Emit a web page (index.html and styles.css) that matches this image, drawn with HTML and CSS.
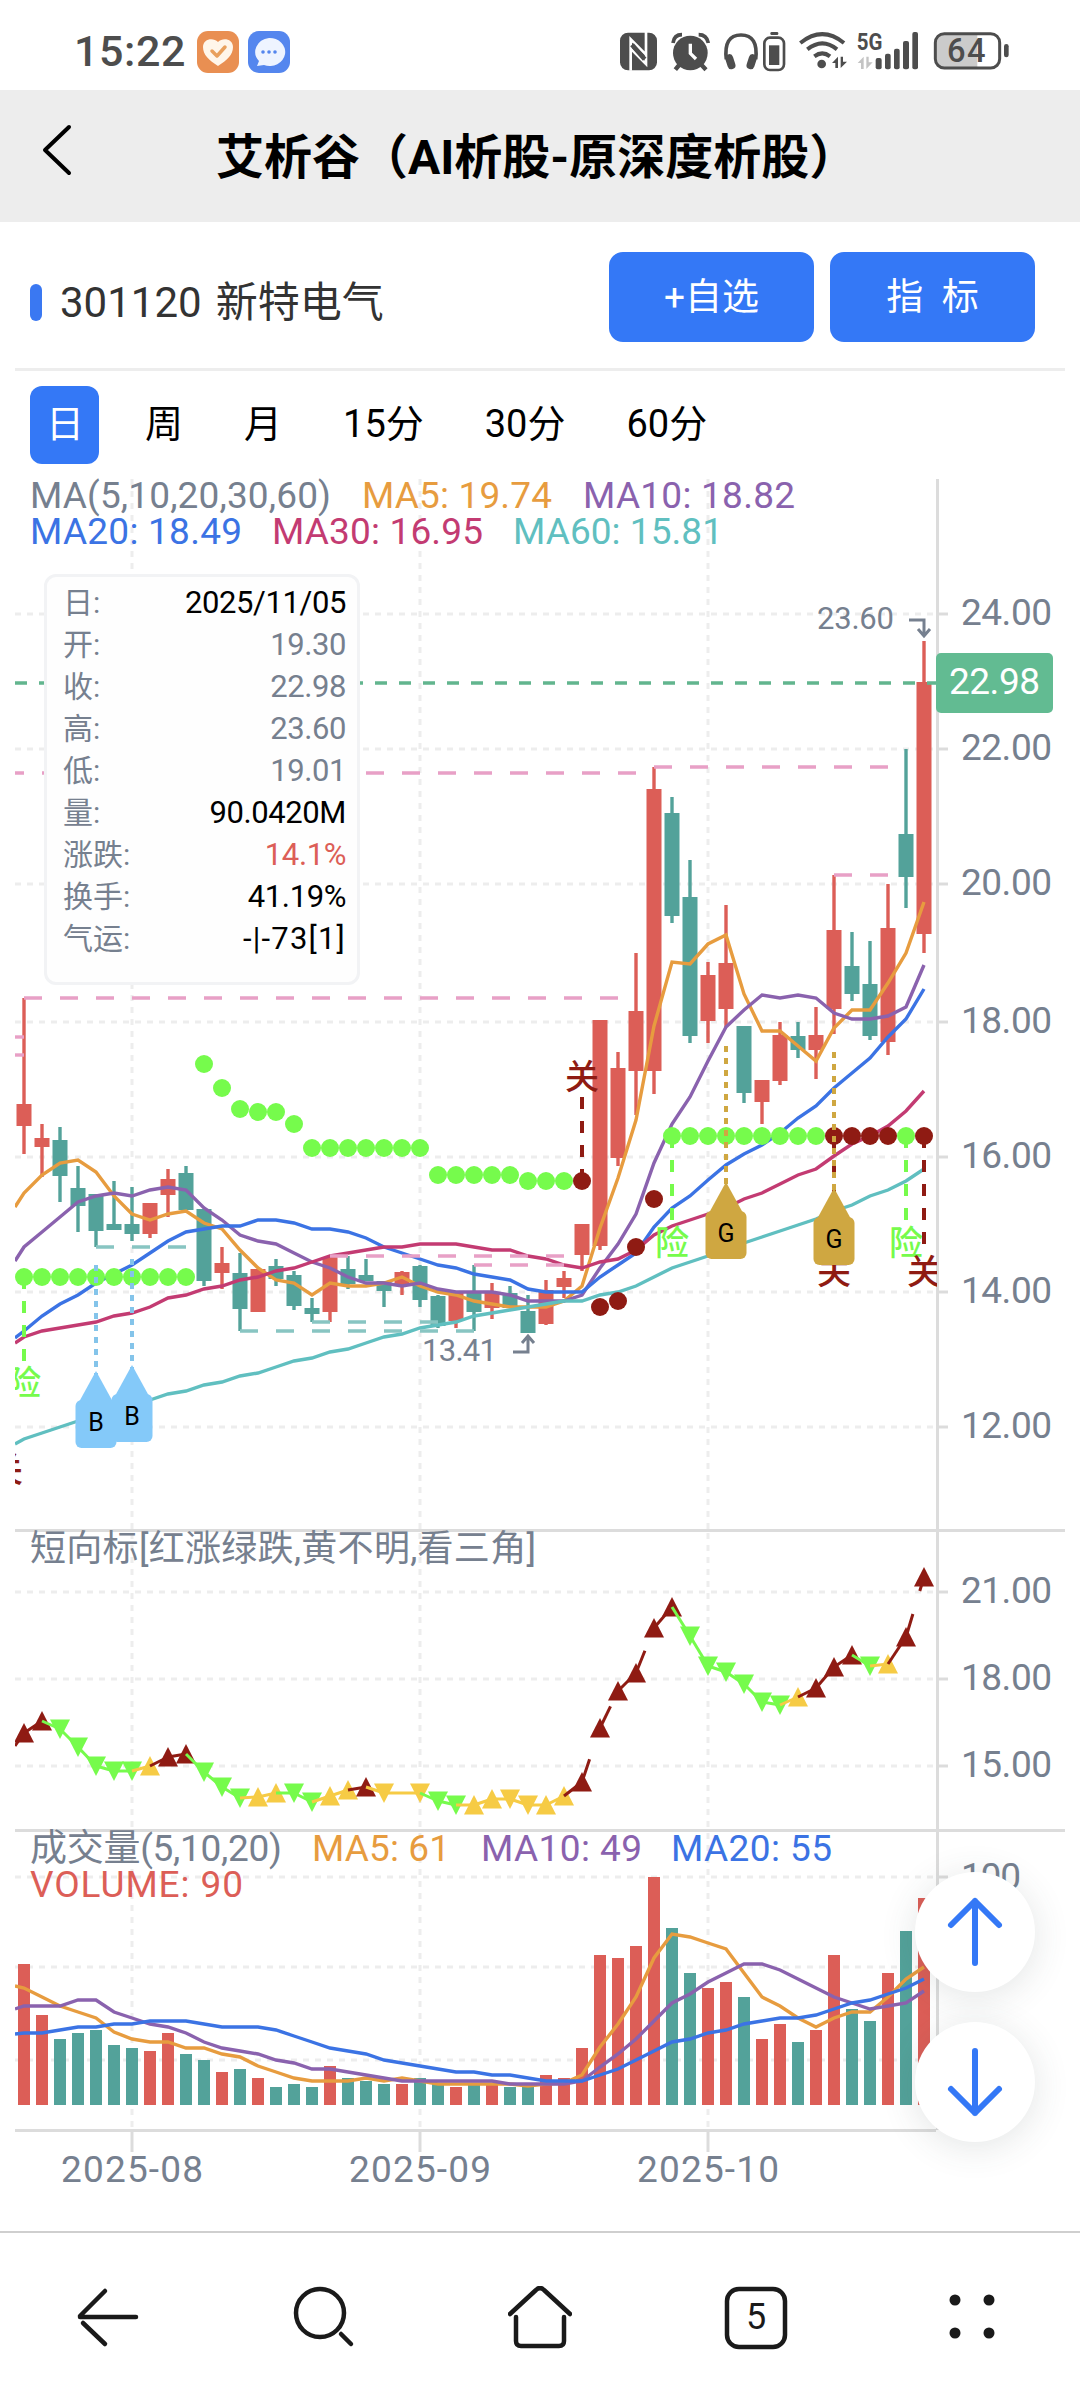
FILE: index.html
```html
<!doctype html>
<html lang="zh-CN">
  <head>
    <meta charset="utf-8">
    <title>艾析谷</title>
    <link rel="stylesheet" href="styles.css">
  </head>
  <body>
    <!-- status bar -->
    <div class="status">
      <span class="clock">15:22</span>
      <svg class="app-icon" viewBox="0 0 42 42">
        <rect width="42" height="42" rx="11" fill="#e98f52"/>
        <path d="M21 35 C12 29 6 24 6 16 C6 8 16 6 21 11 C26 6 36 8 36 16 C36 24 30 29 21 35Z" fill="#fff6ea"/>
        <path d="M15 20 l5 5 l8 -9" fill="none" stroke="#e9a05c" stroke-width="3.5" stroke-linecap="round" stroke-linejoin="round"/>
      </svg>
      <svg class="app-icon" viewBox="0 0 42 42">
        <rect width="42" height="42" rx="11" fill="#5486ee"/>
        <path d="M21 7 a15.500 14 0 1 1 -5 27 l-7 1 l2 -5 a15.500 14 0 0 1 10 -23Z" fill="#eef4ff"/>
        <circle cx="15" cy="21" r="1.800" fill="#5486ee"/>
        <circle cx="21" cy="21" r="1.800" fill="#5486ee"/>
        <circle cx="27" cy="21" r="1.800" fill="#5486ee"/>
      </svg>
      <svg class="signals" viewBox="0 0 1320 198">
        <!-- nfc -->
        <rect x="60" y="38" width="111" height="113" rx="24" fill="#4d4d4d"/>
        <path d="M92 152 V58 L138 104 M138 36 V132 L92 86" fill="none" stroke="#fff" stroke-width="8"/>
        <path d="M96 74 L134 118" stroke="#4d4d4d" stroke-width="14"/>
        <!-- alarm -->
        <circle cx="271" cy="99" r="52" fill="#4d4d4d"/>
        <path d="M219 69 Q222 44 246 44 M296 44 Q320 44 325 69" fill="none" stroke="#4d4d4d" stroke-width="11"/>
        <path d="M240 132 L226 149 M302 132 L318 149" stroke="#4d4d4d" stroke-width="13"/>
        <path d="M271 71 V100 L288 117" fill="none" stroke="#fff" stroke-width="10"/>
        <!-- headphones -->
        <path d="M379 118 Q370 45 423 45 Q476 45 467 118" fill="none" stroke="#4d4d4d" stroke-width="11"/>
        <rect x="379" y="102" width="24" height="46" rx="12" fill="#4d4d4d" transform="rotate(-18 391 125)"/>
        <rect x="443" y="102" width="24" height="46" rx="12" fill="#4d4d4d" transform="rotate(18 455 125)"/>
        <rect x="493" y="53" width="59" height="97" rx="17" fill="none" stroke="#4d4d4d" stroke-width="8"/>
        <rect x="511" y="36" width="24" height="9" rx="4" fill="#4d4d4d"/>
        <rect x="507" y="76" width="31" height="59" fill="#4d4d4d"/>
        <!-- wifi -->
        <g fill="none" stroke="#4d4d4d" stroke-width="12">
          <path d="M601 69 Q667 16 732 69"/>
          <path d="M622 88 Q667 52 711 88"/>
          <path d="M643 109 Q667 91 690 109"/>
        </g>
        <circle cx="665" cy="132" r="13" fill="#4d4d4d"/>
        <path d="M696 129 L714 110 V144 H706 V129Z M722 110 H729 V125 H741 L722 144Z" fill="#4d4d4d"/>
        <path d="M773 129 L791 110 V147 H783 V129Z M799 110 H806 V127 H818 L799 147Z" fill="#c4c4c4"/>
        <text class="net" x="770" y="90" textLength="77" lengthAdjust="spacingAndGlyphs">5G</text>
        <g fill="#4d4d4d">
          <rect x="827" y="114" width="18" height="34" rx="6"/>
          <rect x="855" y="101" width="17" height="47" rx="6"/>
          <rect x="882" y="86" width="17" height="62" rx="6"/>
          <rect x="909" y="63" width="18" height="85" rx="6"/>
          <rect x="937" y="36" width="17" height="112" rx="6"/>
        </g>
        <!-- battery -->
        <path d="M1132 43 H1030 Q1007 43 1007 68 V118 Q1007 143 1030 143 H1132Z" fill="#cbcbcb"/>
        <rect x="1006" y="41" width="193" height="103" rx="27" fill="none" stroke="#4d4d4d" stroke-width="9"/>
        <rect x="1212" y="72" width="14" height="40" rx="7" fill="#4d4d4d"/>
        <text class="percent" x="1041" y="127" textLength="116">64</text>
      </svg>
    </div>

    <header class="titlebar">
      <svg class="chevron" viewBox="0 0 30 52"><path d="M27 3 L3 26 L27 49"/></svg>
      <h1>艾析谷（AI析股-原深度析股）</h1>
    </header>

    <section class="stock">
      <i class="mark"></i>
      <span class="stock-name"><span class="code">301120</span>新特电气</span>
      <button class="btn">+自选</button>
      <button class="btn">指&nbsp; 标</button>
    </section>

    <nav class="periods">
      <a class="active">日</a>
      <a>周</a>
      <a>月</a>
      <a>15分</a>
      <a>30分</a>
      <a>60分</a>
    </nav>

    <main class="chart">
      <svg id="chart" viewBox="0 464 1080 1767"></svg>
      <dl class="card">
        <div><dt>日:</dt><dd class="dark">2025/11/05</dd></div>
        <div><dt>开:</dt><dd>19.30</dd></div>
        <div><dt>收:</dt><dd>22.98</dd></div>
        <div><dt>高:</dt><dd>23.60</dd></div>
        <div><dt>低:</dt><dd>19.01</dd></div>
        <div><dt>量:</dt><dd class="dark">90.0420M</dd></div>
        <div><dt>涨跌:</dt><dd class="up">14.1%</dd></div>
        <div><dt>换手:</dt><dd class="dark">41.19%</dd></div>
        <div><dt>气运:</dt><dd class="dark luck">-|-73[1]</dd></div>
      </dl>
      <div class="floating">
        <button><svg viewBox="0 0 60 72"><path d="M30 67 V5 M6 29 L30 5 L54 29"/></svg></button>
        <button><svg viewBox="0 0 60 72"><path d="M30 5 V67 M6 43 L30 67 L54 43"/></svg></button>
      </div>
    </main>

    <footer class="toolbar">
      <svg viewBox="0 0 64 64"><path d="M60 31 H4 M29 5 L4 30 M7 37 L29 58"/></svg>
      <svg viewBox="0 0 64 64"><circle cx="28" cy="27" r="24"/><path d="M49 48 L59 58"/></svg>
      <svg viewBox="0 0 64 64"><path d="M2 28 L28 4 Q32 0 36 4 L62 28 M8 31 V55 Q8 60 13 60 H51 Q56 60 56 55 V31"/></svg>
      <svg viewBox="0 0 64 64"><rect x="3" y="3" width="58" height="58" rx="12"/><text x="32" y="43">5</text></svg>
      <svg class="dots" viewBox="0 0 64 64"><circle cx="15" cy="14" r="5.500"/><circle cx="49" cy="14" r="5.500"/><circle cx="15" cy="47" r="5.500"/><circle cx="49" cy="47" r="5.500"/></svg>
    </footer>

    <script src="chart.js"></script>
  </body>
</html>
```

FILE: styles.css
```css
* {
  box-sizing: border-box;
}

body {
  margin: 0;
  width: 1080px;
  height: 2400px;
  display: flex;
  flex-direction: column;
  overflow: hidden;
  background: #fff;
  color: #000;
  font-family: Roboto, "Noto Sans CJK SC", sans-serif;
}

button {
  border: 0;
  padding: 0;
  font: inherit;
}

/* status bar */
.status {
  height: 90px;
  padding: 20px 40px 0 74px;
  display: flex;
  align-items: flex-start;
}

.clock {
  width: 123px;
  font-size: 43px;
  line-height: 63px;
  letter-spacing: 0.6px;
  font-weight: 500;
  color: #4d4d4d;
}

.app-icon {
  width: 42px;
  height: 42px;
  margin: 11px 9px 0 0;
}

.signals {
  width: 440px;
  height: 66px;
  margin-left: auto;
}

.net {
  font-size: 72px;
  font-weight: 700;
  fill: #4d4d4d;
}

.percent {
  font-size: 98px;
  font-weight: 500;
  fill: #4d4d4d;
}

/* title */
.titlebar {
  height: 132px;
  padding: 0 42px;
  display: flex;
  align-items: center;
  background: #ededed;
}

.chevron {
  width: 30px;
  height: 52px;
  margin-bottom: 12px;
  fill: none;
  stroke: #000;
  stroke-width: 4;
  stroke-linecap: round;
  stroke-linejoin: round;
}

h1 {
  margin: 3px 0 0 144px;
  font-size: 48px;
  line-height: 60px;
  font-weight: 700;
  white-space: nowrap;
}

/* stock name and buttons */
.stock {
  height: 149px;
  margin: 0 15px;
  padding: 0 30px 0 15px;
  display: flex;
  border-bottom: 3px solid #ededed;
}

.mark {
  width: 12px;
  height: 37px;
  margin-top: 62px;
  border-radius: 6px;
  background: #3a78f2;
}

.stock-name {
  flex: 1;
  margin: 50px 0 0 18px;
  font-size: 42px;
  line-height: 62px;
  color: #333;
}

.code {
  margin-right: 14px;
}

.btn {
  width: 205px;
  height: 90px;
  margin: 30px 0 0 16px;
  padding-bottom: 7px;
  border-radius: 14px;
  background: #3478f6;
  color: #fff;
  font-size: 37px;
}

/* periods */
.periods {
  height: 93px;
  padding: 15px 0 0 30px;
  display: flex;
  gap: 30px;
}

.periods a {
  height: 78px;
  padding: 0 15px 0 16px;
  border-radius: 12px;
  font-size: 38px;
  line-height: 77px;
}

.periods .active {
  background: #3478f6;
  color: #fff;
}

/* chart */
.chart {
  height: 1767px;
  position: relative;
}

#chart {
  display: block;
  width: 1080px;
  height: 1767px;
  font-size: 37px;
}

.grid {
  fill: none;
  stroke: #ededed;
  stroke-width: 3;
  stroke-dasharray: 6 6;
}

.axis {
  fill: none;
  stroke: #dcdcdc;
  stroke-width: 3;
}

.axis-text {
  fill: #76808f;
}

.cn {
  font-size: 34px;
  font-weight: 500;
  text-anchor: middle;
}

.pin {
  fill: #000;
  font-size: 25px;
  text-anchor: middle;
}

.card {
  position: absolute;
  left: 44px;
  top: 110px;
  width: 316px;
  height: 411px;
  margin: 0;
  padding: 5px 11px 0 16px;
  border: 3px solid #f2f3f5;
  border-radius: 12px;
  background: #fefefe;
  color: #76808f;
  font-size: 31px;
}

.card div {
  height: 42px;
  display: flex;
  justify-content: space-between;
  line-height: 42px;
}

.card dt {
  font-size: 30px;
}

.card dd {
  margin: 0;
  letter-spacing: -0.4px;
}

.card .dark {
  color: #000;
}

.card .luck {
  letter-spacing: 1.2px;
}

.card .up {
  color: #dc5e57;
}

/* zoom buttons */
.floating {
  position: absolute;
  left: 915px;
  top: 1408px;
  display: flex;
  flex-direction: column;
  gap: 30px;
}

.floating button {
  width: 120px;
  height: 120px;
  border-radius: 50%;
  background: #fff;
  box-shadow: 0 5px 36px rgba(60, 70, 70, 0.14);
}

.floating svg {
  display: block;
  width: 60px;
  height: 72px;
  margin: 0 auto;
  fill: none;
  stroke: #3478f6;
  stroke-width: 6;
  stroke-linecap: round;
  stroke-linejoin: round;
}

/* bottom toolbar */
.toolbar {
  flex: 1;
  padding-top: 2px;
  display: flex;
  justify-content: space-around;
  align-items: center;
  border-top: 2px solid #cfcfcf;
}

.toolbar svg {
  width: 64px;
  height: 64px;
  fill: none;
  stroke: #1a1a1a;
  stroke-width: 4.5;
  stroke-linecap: round;
  stroke-linejoin: round;
}

.toolbar text {
  fill: #1a1a1a;
  stroke: none;
  font-size: 36px;
  text-anchor: middle;
}

.toolbar .dots {
  fill: #1a1a1a;
  stroke: none;
}
```

FILE: chart.js
```js
const RED = '#dc5e57';
const TEAL = '#53a29a';
const GREEN = '#76fb4c';
const DARK = '#8f1b13';
const YELLOW = '#f6cb45';
const ORANGE = '#e79c3f';
const PURPLE = '#8a62ae';
const BLUE = '#3b73e4';
const PINK = '#c33b72';
const CYAN = '#60bfc0';
const GRAY = '#76808f';

// color, high, body top, body bottom, low, volume top
const candles = [
  ['r', 998, 1104, 1126, 1154, 1964], ['r', 1124, 1138, 1147, 1177, 2015],
  ['g', 1127, 1140, 1176, 1202, 2039], ['g', 1166, 1188, 1206, 1232, 2033],
  ['g', 1194, 1194, 1231, 1247, 2030], ['g', 1181, 1224, 1230, 1230, 2045],
  ['g', 1187, 1224, 1234, 1241, 2048], ['r', 1203, 1203, 1234, 1238, 2051],
  ['r', 1169, 1179, 1195, 1217, 2033], ['g', 1166, 1173, 1210, 1210, 2054],
  ['g', 1209, 1209, 1281, 1286, 2060], ['r', 1247, 1263, 1273, 1289, 2072],
  ['g', 1253, 1273, 1309, 1331, 2069], ['r', 1269, 1269, 1312, 1312, 2078],
  ['g', 1259, 1266, 1279, 1286, 2087], ['g', 1271, 1275, 1306, 1310, 2084],
  ['g', 1298, 1308, 1314, 1322, 2087], ['r', 1257, 1257, 1312, 1322, 2066],
  ['g', 1256, 1269, 1284, 1289, 2078], ['g', 1259, 1275, 1281, 1281, 2081],
  ['g', 1281, 1281, 1291, 1307, 2084], ['r', 1271, 1272, 1284, 1295, 2084],
  ['g', 1265, 1266, 1300, 1307, 2078], ['g', 1295, 1296, 1326, 1328, 2083],
  ['r', 1293, 1293, 1321, 1328, 2087], ['g', 1265, 1293, 1312, 1331, 2084],
  ['r', 1283, 1293, 1308, 1319, 2084], ['g', 1286, 1293, 1308, 1308, 2087],
  ['g', 1295, 1311, 1333, 1333, 2087], ['r', 1280, 1290, 1324, 1325, 2075],
  ['r', 1271, 1278, 1287, 1298, 2078], ['r', 1224, 1224, 1255, 1271, 2048],
  ['r', 1020, 1020, 1246, 1250, 1955], ['r', 1052, 1068, 1158, 1166, 1958],
  ['r', 953, 1011, 1071, 1115, 1946], ['r', 767, 789, 1071, 1094, 1877],
  ['g', 797, 813, 916, 923, 1928], ['g', 860, 897, 1036, 1043, 1973],
  ['r', 962, 975, 1021, 1043, 1988], ['r', 905, 963, 1009, 1027, 1982],
  ['g', 1026, 1026, 1093, 1103, 1997], ['r', 1080, 1080, 1102, 1124, 2039],
  ['r', 1022, 1035, 1081, 1085, 2024], ['g', 1022, 1036, 1050, 1058, 2042],
  ['r', 1007, 1035, 1050, 1079, 2030], ['r', 875, 930, 1009, 1034, 1955],
  ['g', 932, 966, 994, 1001, 2009], ['g', 941, 984, 1036, 1040, 2021],
  ['r', 884, 928, 1042, 1055, 1973], ['g', 749, 834, 877, 908, 1931],
  ['r', 641, 682, 934, 953, 1898]
];

// the first value of each line sits on the left edge of the pane
const priceLines = [
  [ORANGE, [1207, 1193, 1175, 1163, 1160, 1172, 1196, 1214, 1220, 1214, 1211, 1223, 1229, 1250, 1268, 1280, 1283, 1295, 1283, 1286, 1286, 1283, 1277, 1286, 1292, 1295, 1301, 1304, 1307, 1307, 1307, 1301, 1286, 1228, 1178, 1120, 1026, 962, 964, 944, 935, 994, 1031, 1031, 1046, 1061, 1028, 1010, 1010, 983, 953, 902]],
  [PURPLE, [1261, 1247, 1232, 1217, 1202, 1196, 1193, 1196, 1190, 1187, 1190, 1208, 1220, 1235, 1241, 1244, 1253, 1262, 1268, 1277, 1283, 1283, 1286, 1283, 1289, 1292, 1292, 1292, 1295, 1301, 1301, 1301, 1295, 1268, 1244, 1214, 1163, 1124, 1097, 1061, 1027, 1010, 995, 998, 995, 998, 1013, 1019, 1019, 1016, 1007, 965]],
  [BLUE, [1338, 1331, 1316, 1304, 1295, 1283, 1274, 1265, 1253, 1241, 1232, 1229, 1226, 1226, 1220, 1220, 1223, 1229, 1229, 1232, 1238, 1247, 1253, 1259, 1265, 1268, 1274, 1277, 1280, 1289, 1292, 1292, 1292, 1277, 1265, 1253, 1227, 1208, 1196, 1180, 1165, 1154, 1145, 1133, 1118, 1106, 1088, 1073, 1058, 1037, 1019, 989]],
  [PINK, [1343, 1337, 1331, 1328, 1325, 1322, 1316, 1313, 1307, 1298, 1295, 1289, 1286, 1280, 1277, 1271, 1268, 1262, 1256, 1253, 1250, 1247, 1247, 1244, 1244, 1244, 1247, 1250, 1250, 1256, 1259, 1265, 1268, 1262, 1259, 1250, 1235, 1226, 1220, 1214, 1208, 1199, 1193, 1184, 1175, 1169, 1156, 1144, 1136, 1126, 1111, 1091]],
  [CYAN, [1444, 1439, 1433, 1427, 1421, 1415, 1410, 1406, 1400, 1394, 1391, 1385, 1382, 1376, 1373, 1367, 1361, 1358, 1352, 1349, 1343, 1337, 1334, 1328, 1325, 1322, 1316, 1313, 1310, 1307, 1304, 1301, 1301, 1295, 1292, 1286, 1277, 1268, 1262, 1256, 1250, 1243, 1237, 1231, 1225, 1219, 1211, 1205, 1196, 1190, 1181, 1169]]
];

const volumeLines = [
  [ORANGE, [1986, 1988, 1997, 2006, 2012, 2018, 2032, 2039, 2042, 2042, 2048, 2048, 2054, 2057, 2066, 2072, 2078, 2081, 2081, 2081, 2078, 2081, 2078, 2081, 2084, 2084, 2084, 2084, 2084, 2086, 2084, 2083, 2075, 2047, 2024, 1997, 1958, 1934, 1937, 1943, 1949, 1973, 1997, 2006, 2018, 2027, 2018, 2012, 2012, 1997, 1979, 1967]],
  [PURPLE, [2009, 2006, 2006, 2006, 2000, 2000, 2012, 2018, 2024, 2027, 2033, 2042, 2048, 2051, 2054, 2060, 2063, 2069, 2069, 2072, 2075, 2078, 2081, 2081, 2081, 2081, 2081, 2081, 2084, 2084, 2084, 2084, 2081, 2067, 2054, 2039, 2021, 2003, 1994, 1982, 1973, 1964, 1964, 1970, 1979, 1988, 1997, 2003, 2009, 2006, 2003, 1991]],
  [BLUE, [2034, 2033, 2033, 2030, 2027, 2027, 2024, 2024, 2021, 2021, 2021, 2024, 2027, 2027, 2027, 2030, 2036, 2042, 2048, 2051, 2054, 2060, 2063, 2066, 2069, 2072, 2072, 2075, 2075, 2078, 2081, 2081, 2081, 2075, 2069, 2060, 2051, 2042, 2039, 2033, 2030, 2024, 2021, 2018, 2018, 2015, 2009, 2003, 2000, 1994, 1988, 1979]]
];

const dots = [1277, 1277, 1277, 1277, 1277, 1277, 1277, 1277, 1277, 1277, 1064, 1088, 1109, 1112, 1112, 1124, 1148, 1148, 1148, 1148, 1148, 1148, 1148, 1175, 1175, 1175, 1175, 1175, 1181, 1181, 1181, 1181, 1307, 1301, 1247, 1199, 1136, 1136, 1136, 1136, 1136, 1136, 1136, 1136, 1136, 1136, 1136, 1136, 1136, 1136, 1136];
const darkDots = [31, 32, 33, 34, 35, 45, 46, 47, 48, 50];

// R / G / Y with u (up) or d (down), '-' has no marker
const trend = 'Ru1733 Ru1721 Gd1729 Gd1747 Gd1766 Gd1771 Gd1771 Yu1766 Ru1757 Ru1754 Gd1772 Gd1787 Gd1798 Yu1797 Yu1793 Gd1793 Gd1802 Yu1796 Yu1790 Ru1787 Yd1793 Y-1793 Yd1793 Gd1801 Gd1805 Yu1805 Yu1799 Yd1799 Yd1805 Yu1805 Yu1796 Ru1782 Ru1728 Ru1691 Ru1673 Ru1628 Ru1607 Gd1636 Gd1666 Gd1672 Gd1684 Gd1702 Gd1705 Yu1697 Ru1688 Ru1667 Ru1655 Gd1666 Yu1664 Ru1637 Ru1577'.split(' ');

let out = '<defs><clipPath id="pane"><rect x="15" y="470" width="922" height="1700"/></clipPath></defs>';

function x(i) {
  return 24 + 18 * i;
}

function path(d, cls) {
  out += `<path class="${cls}" d="${d}"/>`;
}

function line(x1, y1, x2, y2, color, width, dash) {
  out += `<path d="M${x1} ${y1}L${x2} ${y2}" stroke="${color}" stroke-width="${width}" stroke-dasharray="${dash || 'none'}"/>`;
}

function text(str, left, base, width, color, size) {
  out += `<text x="${left}" y="${base}" textLength="${width}" fill="${color}" font-size="${size || 37}">${str}</text>`;
}

function curve(item) {
  const pts = item[1].map((y, i) => (i === 0 ? 15 : x(i - 1)) + ',' + y);
  out += `<polyline points="${pts.join(' ')}" fill="none" stroke="${item[0]}" stroke-width="3.4"/>`;
}

function drawGrid() {
  [614, 749, 884, 1022, 1157, 1292, 1427, 1592, 1679, 1766, 1877, 1967, 2060].forEach(y => {
    path(`M15 ${y}H936`, 'grid');
    if (y < 1900) {
      path(`M939 ${y}H948`, 'axis');
    }
  });
  [132, 420, 708].forEach(gx => {
    path(`M${gx} 479V1530M${gx} 1533V1829M${gx} 1833V2130`, 'grid');
    path(`M${gx} 2132V2152`, 'axis');
  });
  path('M15 1530.5H1065M15 1830.5H1065M15 2130.5H936M937.5 479V2130', 'axis');
}

function drawCandles() {
  candles.forEach((c, i) => {
    const color = c[0] === 'r' ? RED : TEAL;
    line(x(i), c[1], x(i), c[4], color, 3.4);
    out += `<rect x="${x(i) - 7.5}" y="${c[2]}" width="15" height="${c[3] - c[2]}" fill="${color}"/>`;
  });
}

function drawLevels() {
  const pink = [[24, 618, 998], [6, 636, 773], [654, 888, 767], [834, 888, 875], [6, 24, 1037], [6, 24, 1055], [330, 564, 1256], [474, 564, 1265]];
  const teal = [[96, 186, 1247], [312, 438, 1322], [240, 474, 1331]];
  pink.forEach(p => line(p[0], p[2], p[1], p[2], '#e8a0c6', 3.4, '18 18'));
  teal.forEach(p => line(p[0], p[2], p[1], p[2], '#88c5c2', 3.4, '18 18'));
}

function drawDots() {
  dots.forEach((y, i) => {
    out += `<circle cx="${x(i)}" cy="${y}" r="9" fill="${darkDots.includes(i) ? DARK : GREEN}"/>`;
  });
}

function sign(str, i, from, to, mid, color) {
  line(x(i), from, x(i), to, color, 4, '12 12');
  out += `<text class="cn" x="${x(i)}" y="${mid + 13}" fill="${color}">${str}</text>`;
}

function pin(str, i, from, tip, color, stem) {
  const c = x(i);
  line(c, from, c, tip + 4, stem, 4, '6 6');
  out += `<path d="M${c} ${tip}L${c + 17} ${tip + 31}H${c - 17}Z" fill="${color}"/>`;
  out += `<rect x="${c - 20.5}" y="${tip + 29}" width="41" height="48" rx="6" fill="${color}"/>`;
  out += `<text class="pin" x="${c}" y="${tip + 60}">${str}</text>`;
}

function drawTrend() {
  const colors = { R: DARK, G: GREEN, Y: YELLOW };
  let px = 15;
  let py = 1746;
  trend.forEach((t, i) => {
    const color = colors[t[0]];
    const y = Number(t.slice(2));
    const cx = x(i);
    line(px, py, cx, y, color, 3, t[0] === 'R' ? '24 24' : '');
    if (t[1] === 'u') {
      out += `<path d="M${cx} ${y - 10}L${cx + 10} ${y + 9.5}H${cx - 10}Z" fill="${color}"/>`;
    } else if (t[1] === 'd') {
      out += `<path d="M${cx} ${y + 10}L${cx + 10} ${y - 9.5}H${cx - 10}Z" fill="${color}"/>`;
    }
    px = cx;
    py = y;
  });
}

function drawVolume() {
  candles.forEach((c, i) => {
    out += `<rect x="${x(i) - 6}" y="${c[5]}" width="12" height="${2105 - c[5]}" fill="${c[0] === 'r' ? RED : TEAL}"/>`;
  });
  volumeLines.forEach(curve);
}

function drawTexts() {
  text('MA(5,10,20,30,60)', 30, 508, 301, GRAY);
  text('MA5: 19.74', 362, 508, 190, ORANGE);
  text('MA10: 18.82', 583, 508, 212, PURPLE);
  text('MA20: 18.49', 30, 544, 212, BLUE);
  text('MA30: 16.95', 272, 544, 211, PINK);
  text('MA60: 15.81', 513, 544, 210, CYAN);
  text('短向标[红涨绿跌,黄不明,看三角]', 30, 1561, 506, GRAY, 36);
  text('成交量(5,10,20)', 30, 1861, 252, GRAY, 37);
  text('MA5: 61', 312, 1861, 138, ORANGE);
  text('MA10: 49', 481, 1861, 161, PURPLE);
  text('MA20: 55', 671, 1861, 161, BLUE);
  text('VOLUME: 90', 30, 1897, 213, RED);

  const labels = [['24.00', 625], ['22.00', 760], ['20.00', 895], ['18.00', 1033], ['16.00', 1168], ['14.00', 1303], ['12.00', 1438], ['21.00', 1603], ['18.00', 1690], ['15.00', 1777]];
  labels.forEach(l => text(l[0], 961, l[1], 91, GRAY));
  text('100', 961, 1889, 60, GRAY);
  text('2025-08', 61, 2182, 142, GRAY);
  text('2025-09', 349, 2182, 142, GRAY);
  text('2025-10', 637, 2182, 142, GRAY);

  // highest and lowest price
  text('23.60', 817, 629, 77, GRAY, 31);
  text('13.41', 422, 1361, 75, GRAY, 31);
  out += `<path d="M909 620H924V635M918 629L924 636L930 629M513 1352H528V1337M522 1343L528 1336L534 1343" fill="none" stroke="${GRAY}" stroke-width="3"/>`;
}

drawGrid();
out += '<g clip-path="url(#pane)">';
drawCandles();
priceLines.forEach(curve);
drawLevels();
drawDots();
sign('险', 0, 1277, 1361, 1382, GREEN);
sign('关', 31, 1181, 1097, 1076, DARK);
sign('险', 36, 1136, 1220, 1242, GREEN);
sign('关', 45, 1136, 1244, 1271, DARK);
sign('险', 49, 1136, 1220, 1242, GREEN);
sign('关', 50, 1136, 1244, 1271, DARK);
sign('关', -1, 1450, 1450, 1469, DARK);
pin('B', 4, 1265, 1371, '#84c9f9', '#84c4ea');
pin('B', 6, 1259, 1365, '#84c9f9', '#84c4ea');
pin('G', 39, 1046, 1182, '#cfa741', '#cfa741');
pin('G', 45, 1052, 1188, '#cfa741', '#cfa741');
line(15, 683, 937, 683, '#62b58e', 3.4, '12 12');
drawTrend();
drawVolume();
out += '</g>';
drawTexts();
out += '<rect x="936" y="653" width="117" height="60" rx="5" fill="#62bb92"/>';
text('22.98', 949, 694, 91, '#fff');

document.getElementById('chart').innerHTML = out;
```
